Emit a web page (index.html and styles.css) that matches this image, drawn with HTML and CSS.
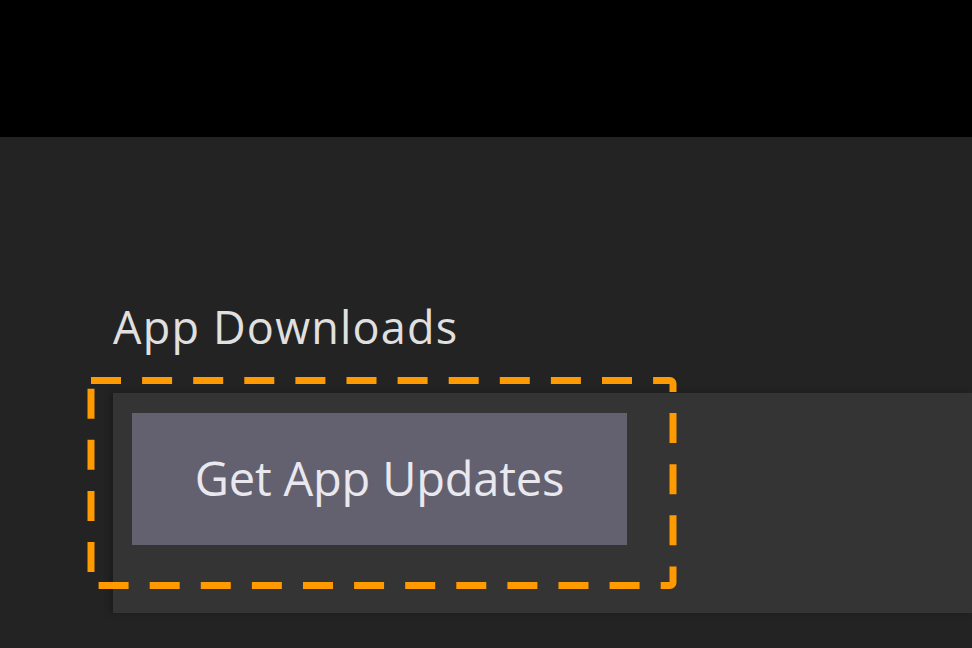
FILE: index.html
```html
<!DOCTYPE html>
<html lang="en">
<head>
<meta charset="utf-8">
<title>App Downloads</title>
<link rel="stylesheet" href="styles.css">
</head>
<body>
<div class="page">
  <header class="topbar"></header>
  <main class="content">
    <h2 class="section-title">App Downloads</h2>
    <section class="panel">
      <button class="update-btn" type="button">Get App Updates</button>
    </section>
  </main>
  <svg class="highlight" width="972" height="648" viewBox="0 0 972 648" aria-hidden="true">
    <path d="M91 380.5 H670 A3 3 0 0 1 673 383.5 V582.5 A3 3 0 0 1 670 585.5 H98" fill="none" stroke="#ff9a00" stroke-width="7" stroke-dasharray="30 21.1"/>
    <path d="M91 572 V388" fill="none" stroke="#ff9a00" stroke-width="7" stroke-dasharray="30 21.1"/>
  </svg>
</div>
</body>
</html>
```

FILE: styles.css
```css
html, body {
  margin: 0;
  padding: 0;
}

body {
  background: #232323;
  font-family: "Open Sans", "Noto Sans", sans-serif;
  overflow: hidden;
}

.page {
  position: relative;
  width: 972px;
  height: 648px;
  overflow: hidden;
}

.topbar {
  height: 137px;
  background: #000;
}

.content {
  display: flex;
  flex-direction: column;
  padding-top: 167px;
  padding-left: 113px;
}

.section-title {
  margin: 0;
  font-size: 45px;
  line-height: 46px;
  font-weight: 400;
  color: #e0e0e0;
  letter-spacing: 1.2px;
}

.panel {
  margin-top: 43px;
  height: 220px;
  box-sizing: border-box;
  padding: 20px 0 0 19px;
  background: #343434;
  box-shadow: -3px 0 6px rgba(0, 0, 0, 0.25);
}

.update-btn {
  display: flex;
  align-items: center;
  justify-content: center;
  width: 495px;
  height: 132px;
  border: 0;
  padding: 0 0 2px 0;
  margin: 0;
  background: #63616f;
  color: #e9e8ee;
  font-family: "Open Sans", "Noto Sans", sans-serif;
  font-size: 47px;
  font-weight: 400;
  letter-spacing: -0.2px;
}

.highlight {
  position: absolute;
  left: 0;
  top: 0;
  pointer-events: none;
}
```
